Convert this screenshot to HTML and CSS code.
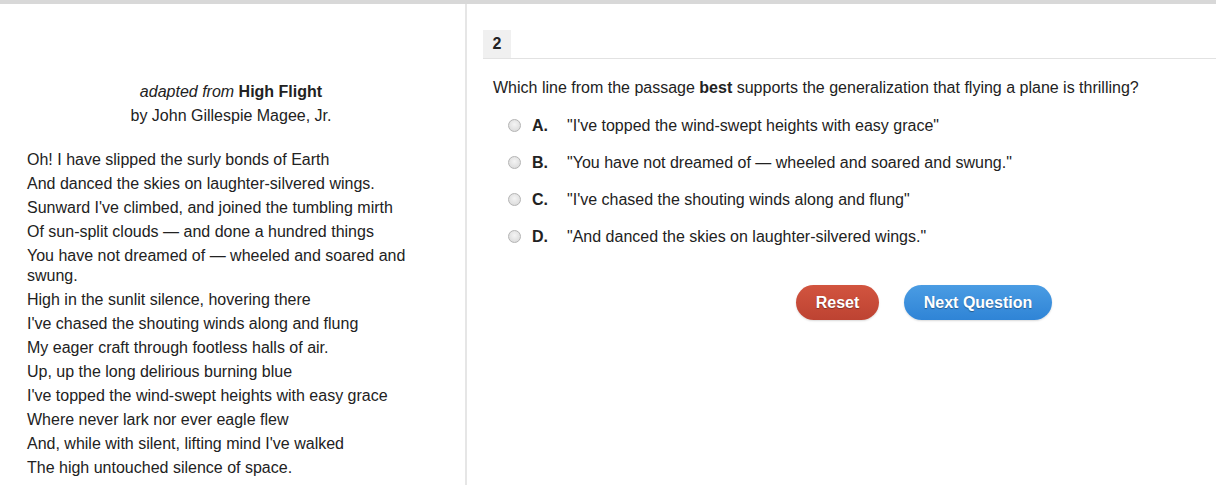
FILE: index.html
```html
<!DOCTYPE html>
<html>
<head>
<meta charset="utf-8">
<link rel="stylesheet" href="styles.css">
</head>
<body>
<div class="topbar"></div>
<div class="main">
  <div class="passage">
    <div class="source">
      <p><i>adapted from</i> <b>High Flight</b></p>
      <p>by John Gillespie Magee, Jr.</p>
    </div>
    <div class="poem">
      <p>Oh! I have slipped the surly bonds of Earth</p>
      <p>And danced the skies on laughter-silvered wings.</p>
      <p>Sunward I've climbed, and joined the tumbling mirth</p>
      <p>Of sun-split clouds — and done a hundred things</p>
      <p>You have not dreamed of — wheeled and soared and swung.</p>
      <p>High in the sunlit silence, hovering there</p>
      <p>I've chased the shouting winds along and flung</p>
      <p>My eager craft through footless halls of air.</p>
      <p>Up, up the long delirious burning blue</p>
      <p>I've topped the wind-swept heights with easy grace</p>
      <p>Where never lark nor ever eagle flew</p>
      <p>And, while with silent, lifting mind I've walked</p>
      <p>The high untouched silence of space.</p>
    </div>
  </div>
  <div class="question">
    <div class="qhead"><span class="qnum">2</span></div>
    <p class="prompt">Which line from the passage <b>best</b> supports the generalization that flying a plane is thrilling?</p>
    <ul class="options">
      <li><span class="radio"></span><span class="letter">A.</span><span class="text">"I've topped the wind-swept heights with easy grace"</span></li>
      <li><span class="radio"></span><span class="letter">B.</span><span class="text">"You have not dreamed of — wheeled and soared and swung."</span></li>
      <li><span class="radio"></span><span class="letter">C.</span><span class="text">"I've chased the shouting winds along and flung"</span></li>
      <li><span class="radio"></span><span class="letter">D.</span><span class="text">"And danced the skies on laughter-silvered wings."</span></li>
    </ul>
    <div class="actions">
      <button class="btn reset">Reset</button>
      <button class="btn next">Next Question</button>
    </div>
  </div>
</div>
</body>
</html>
```

FILE: styles.css
```css
html, body {
  margin: 0;
  padding: 0;
  background: #fff;
}
body {
  font-family: "Liberation Sans", Arial, sans-serif;
  font-size: 16px;
  color: #222;
  overflow: hidden;
}
p { margin: 0; }
.topbar {
  height: 4px;
  background: #d8d8d8;
}
.main {
  display: flex;
  height: 481px;
}
.passage {
  width: 467px;
  flex: none;
  box-sizing: border-box;
  border-right: 2px solid #e6e6e6;
  padding: 78px 30px 0 27px;
}
.source {
  text-align: center;
}
.source p, .poem p {
  line-height: 20px;
  margin-bottom: 4px;
}
.poem {
  margin-top: 24px;
  width: 410px;
}
.question {
  flex: 1;
  padding: 26px 0 0 16px;
}
.qhead {
  border-bottom: 1px solid #e2e2e2;
  height: 28px;
}
.qnum {
  display: inline-flex;
  align-items: center;
  justify-content: center;
  width: 28px;
  height: 28px;
  background: #f0f0f0;
  font-weight: bold;
  font-size: 16px;
}
.prompt {
  margin: 19px 0 0 10px;
  line-height: 20px;
}
.options {
  list-style: none;
  margin: 9px 0 0 0;
  padding: 0 0 0 25px;
}
.options li {
  display: flex;
  align-items: center;
  height: 37px;
}
.radio {
  width: 11px;
  height: 11px;
  border-radius: 50%;
  border: 1px solid #b4b4b4;
  background: radial-gradient(circle at 50% 40%, #f4f4f4, #d6d6d6);
  margin-right: 11px;
  flex: none;
}
.letter {
  font-weight: bold;
  width: 35px;
  flex: none;
}
.actions {
  display: flex;
  gap: 25px;
  margin: 30px 0 0 313px;
}
.btn {
  font-family: "Liberation Sans", Arial, sans-serif;
  font-size: 16px;
  font-weight: bold;
  color: #fff;
  border: none;
  border-radius: 18px;
  height: 35px;
  padding: 0;
  text-shadow: 0 1px 1px rgba(0,0,0,0.35);
  box-shadow: 0 1px 2px rgba(0,0,0,0.15);
}
.reset {
  width: 83px;
  background: linear-gradient(#d2543f, #bd4332);
}
.next {
  width: 148px;
  background: linear-gradient(#4a9ce3, #2f84d6);
}
```
